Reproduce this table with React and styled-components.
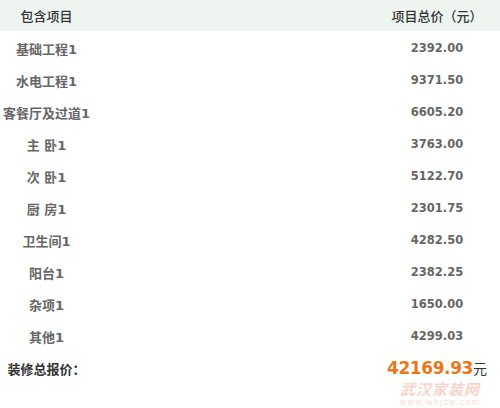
import React from 'react';
import styled, { createGlobalStyle } from 'styled-components';

const GlobalStyle = createGlobalStyle`
  html, body {
    margin: 0;
    padding: 0;
    background: #ffffff;
  }
  body {
    font-family: "DejaVu Sans", "Noto Sans CJK SC", sans-serif;
  }
`;

const Table = styled.div`
  position: relative;
  width: 500px;
  height: 408px;
  overflow: hidden;
  background: #ffffff;
`;

const HeaderRow = styled.div`
  display: flex;
  align-items: center;
  height: 31px;
  margin-bottom: 1px;
  background: #eef5f1;
  color: #333333;
  font-size: 13px;
  font-family: "Noto Sans CJK SC", sans-serif;
  font-weight: 500;
`;

const HeadCell = styled.div`
  width: ${(p) => p.$width}px;
  margin-left: ${(p) => (p.$right ? 'auto' : '0')};
  text-align: center;
  white-space: nowrap;
`;

const Row = styled.div`
  display: flex;
  align-items: center;
  height: 32px;
`;

const NameCell = styled.div`
  width: 93px;
  text-align: center;
  white-space: nowrap;
  font-size: 13px;
  font-weight: bold;
  color: ${(p) => (p.$dark ? '#333333' : '#666666')};
`;

const PriceCell = styled.div`
  margin-left: auto;
  width: 126px;
  text-align: center;
  white-space: nowrap;
  font-size: 11.5px;
  font-weight: bold;
  color: #666666;
`;

const TotalPrice = styled.div`
  margin-left: auto;
  width: 126px;
  text-align: center;
  white-space: nowrap;
  color: #333333;
`;

const Amount = styled.span`
  font-size: 17px;
  font-weight: bold;
  letter-spacing: -0.4px;
  color: #e8771c;
`;

const Unit = styled.span`
  font-family: "Noto Sans CJK SC", sans-serif;
  font-size: 14px;
  color: #333333;
`;

const Watermark = styled.div`
  position: absolute;
  left: 398px;
  top: 380px;
  width: 84px;
  display: flex;
  flex-direction: column;
  align-items: center;
  pointer-events: none;
`;

const MarkTitle = styled.span`
  font-family: "Noto Sans CJK SC", sans-serif;
  font-size: 15px;
  font-weight: bold;
  font-style: italic;
  letter-spacing: 1px;
  line-height: 18px;
  color: #f8d4cc;
`;

const MarkUrl = styled.span`
  font-family: "DejaVu Sans", sans-serif;
  font-size: 8px;
  letter-spacing: 1.2px;
  line-height: 10px;
  color: #f7e0db;
`;

const items = [
  ['基础工程1', '2392.00'],
  ['水电工程1', '9371.50'],
  ['客餐厅及过道1', '6605.20'],
  ['主 卧1', '3763.00'],
  ['次 卧1', '5122.70'],
  ['厨 房1', '2301.75'],
  ['卫生间1', '4282.50'],
  ['阳台1', '2382.25'],
  ['杂项1', '1650.00'],
  ['其他1', '4299.03'],
];

export default function App() {
  return (
    <Table>
      <GlobalStyle />
      <HeaderRow>
        <HeadCell $width={93}>包含项目</HeadCell>
        <HeadCell $width={126} $right>项目总价（元）</HeadCell>
      </HeaderRow>
      {items.map(([name, price]) => (
        <Row key={name}>
          <NameCell>{name}</NameCell>
          <PriceCell>{price}</PriceCell>
        </Row>
      ))}
      <Row>
        <NameCell $dark>装修总报价：</NameCell>
        <TotalPrice>
          <Amount>42169.93</Amount>
          <Unit>元</Unit>
        </TotalPrice>
      </Row>
      <Watermark>
        <MarkTitle>武汉家装网</MarkTitle>
        <MarkUrl>www.whjzw.com</MarkUrl>
      </Watermark>
    </Table>
  );
}
